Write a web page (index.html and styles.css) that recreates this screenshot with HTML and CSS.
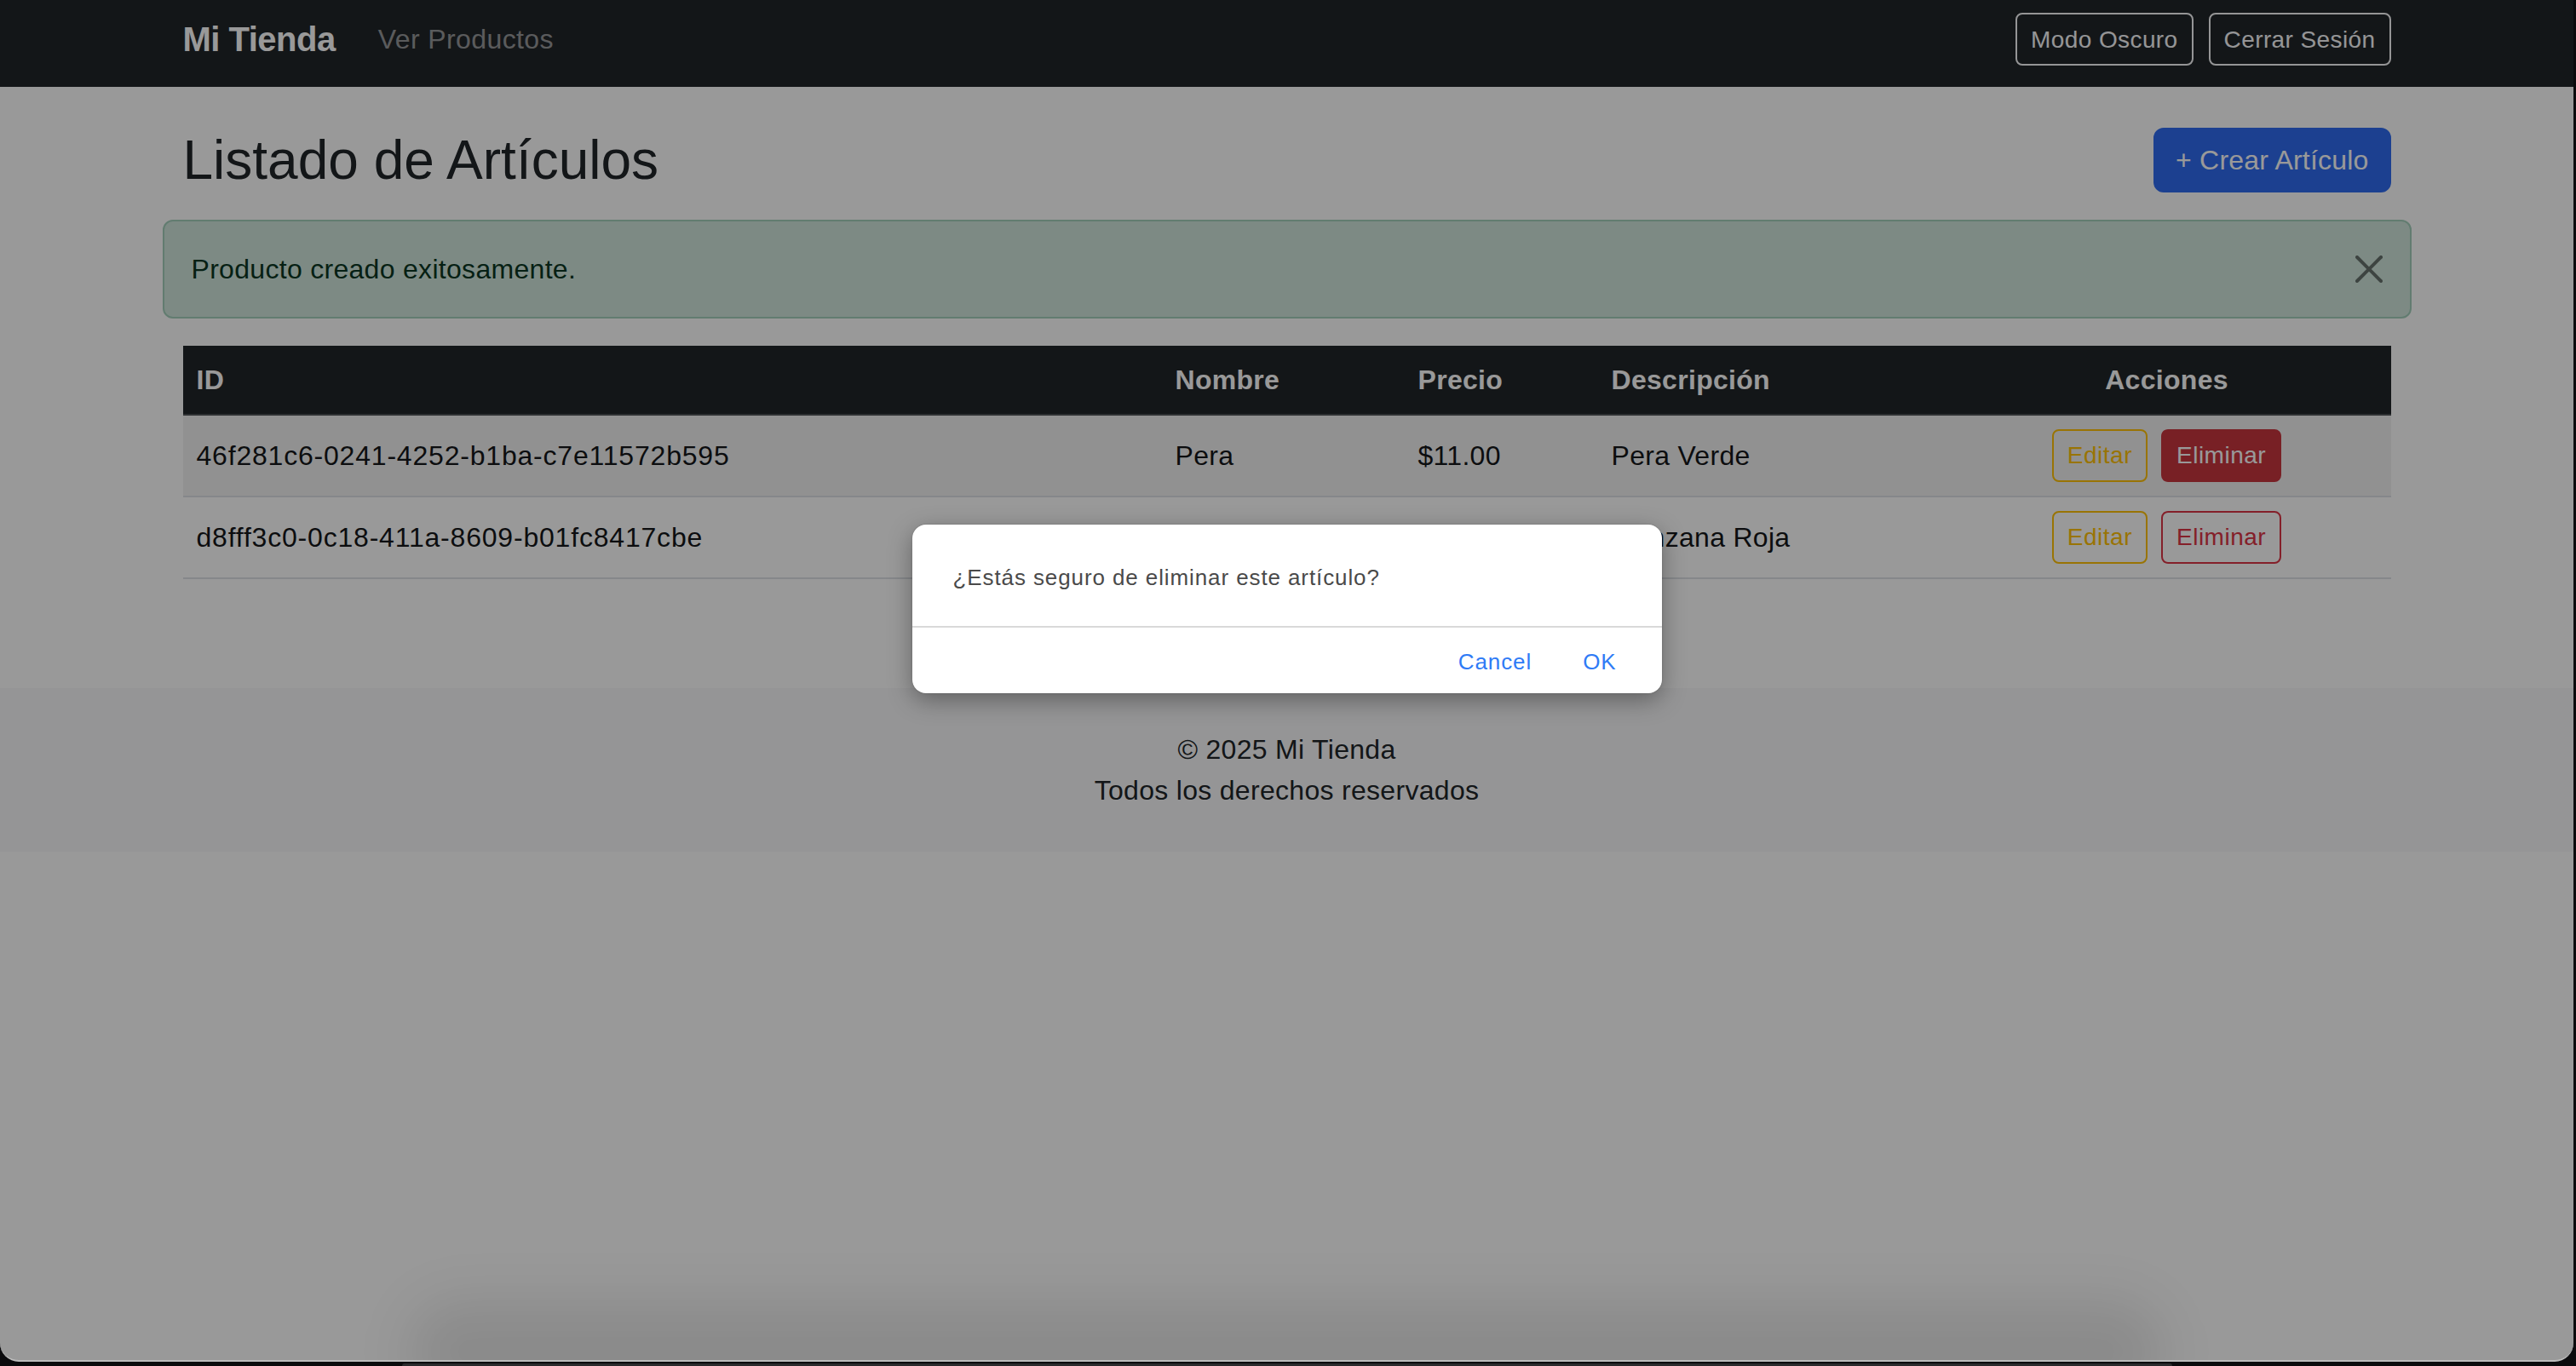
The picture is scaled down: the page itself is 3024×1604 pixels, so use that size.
FILE: index.html
```html
<!DOCTYPE html>
<html lang="es">
<head>
<meta charset="utf-8">
<title>Mi Tienda</title>
<link rel="stylesheet" href="styles.css">
</head>
<body>
<div class="window">
  <nav class="navbar">
    <div class="nav-inner">
      <a class="brand">Mi Tienda</a>
      <a class="nav-link">Ver Productos</a>
      <div class="nav-actions">
        <button class="btn-nav">Modo Oscuro</button>
        <button class="btn-nav">Cerrar Sesión</button>
      </div>
    </div>
  </nav>

  <main class="main">
    <div class="page-head">
      <h2 class="title">Listado de Artículos</h2>
      <a class="btn-primary">+ Crear Artículo</a>
    </div>

    <div class="alert">
      <span>Producto creado exitosamente.</span>
      <button class="btn-close" aria-label="Close">
        <svg viewBox="0 0 16 16" width="32" height="32"><path d="M.293.293a1 1 0 0 1 1.414 0L8 6.586 14.293.293a1 1 0 1 1 1.414 1.414L9.414 8l6.293 6.293a1 1 0 0 1-1.414 1.414L8 9.414l-6.293 6.293a1 1 0 0 1-1.414-1.414L6.586 8 .293 1.707a1 1 0 0 1 0-1.414z"/></svg>
      </button>
    </div>

    <table class="table">
      <colgroup>
        <col class="c-id"><col class="c-name"><col class="c-price"><col class="c-desc"><col class="c-act">
      </colgroup>
      <thead>
        <tr>
          <th>ID</th>
          <th>Nombre</th>
          <th>Precio</th>
          <th>Descripción</th>
          <th class="center">Acciones</th>
        </tr>
      </thead>
      <tbody>
        <tr class="striped">
          <td class="id">46f281c6-0241-4252-b1ba-c7e11572b595</td>
          <td>Pera</td>
          <td>$11.00</td>
          <td>Pera Verde</td>
          <td class="center">
            <div class="actions">
              <a class="btn-sm btn-warning-outline">Editar</a>
              <a class="btn-sm btn-danger">Eliminar</a>
            </div>
          </td>
        </tr>
        <tr>
          <td class="id">d8fff3c0-0c18-411a-8609-b01fc8417cbe</td>
          <td>Manzana</td>
          <td>$8.00</td>
          <td>Manzana Roja</td>
          <td class="center">
            <div class="actions">
              <a class="btn-sm btn-warning-outline">Editar</a>
              <a class="btn-sm btn-danger-outline">Eliminar</a>
            </div>
          </td>
        </tr>
      </tbody>
    </table>
  </main>

  <footer class="footer">
    <p>© 2025 Mi Tienda</p>
    <p>Todos los derechos reservados</p>
  </footer>

  <div class="overlay"></div>
  <div class="dock-shadow"></div>

  <div class="dialog" role="alertdialog">
    <div class="dialog-msg">¿Estás seguro de eliminar este artículo?</div>
    <div class="dialog-actions">
      <button class="dialog-btn">Cancel</button>
      <button class="dialog-btn">OK</button>
    </div>
  </div>
</div>
<div class="dock-edge"></div>
</body>
</html>
```

FILE: styles.css
```css
* { box-sizing: border-box; }

html, body {
  margin: 0;
  padding: 0;
}

body {
  background: #0b0b0d;
  font-family: "Liberation Sans", Arial, sans-serif;
  font-size: 32px;
  line-height: 48px;
  letter-spacing: 0.3px;
  color: #212529;
  width: 3024px;
  height: 1604px;
  overflow: hidden;
}

.window {
  position: relative;
  width: 3021px;
  height: 1599px;
  background: #ffffff;
  border-bottom: 2px solid #bcbcbc;
  border-radius: 0 0 22px 22px;
  overflow: hidden;
}

/* ---------- navbar ---------- */
.navbar {
  height: 102px;
  background: #212529;
}

.nav-inner {
  width: 2592px;
  height: 91px;
  margin: 0 auto;
  display: flex;
  align-items: center;
}

.brand {
  font-size: 40px;
  font-weight: 700;
  letter-spacing: -0.5px;
  color: #ffffff;
  margin-right: 34px;
  line-height: 60px;
}

.nav-link {
  padding: 0 16px;
  color: rgba(255, 255, 255, 0.55);
  font-size: 32px;
  letter-spacing: 0.4px;
}

.nav-actions {
  margin-left: auto;
  display: flex;
  gap: 18px;
}

.btn-nav {
  font-family: inherit;
  font-size: 28px;
  line-height: 42px;
  letter-spacing: 0.4px;
  padding: 9px 16px 7px;
  background: transparent;
  color: #f8f9fa;
  border: 2px solid #f8f9fa;
  border-radius: 8px;
}

/* ---------- main ---------- */
.main {
  width: 2640px;
  margin: 48px auto 0;
  padding-bottom: 32px;
}

.page-head {
  margin: 0 24px;
  height: 76px;
  display: flex;
  align-items: center;
  justify-content: space-between;
}

.title {
  margin: 0;
  font-size: 64px;
  font-weight: 400;
  line-height: 76.8px;
  letter-spacing: 0;
  color: #212529;
}

.btn-primary {
  display: inline-block;
  font-size: 32px;
  line-height: 48px;
  letter-spacing: 0.2px;
  padding: 12px 24px;
  border: 2px solid #2f6cf0;
  border-radius: 12px;
  background: #2f6cf0;
  color: #ffffff;
}

.alert {
  position: relative;
  margin-top: 32px;
  padding: 32px 96px 32px 32px;
  background: #d1e7dd;
  border: 2px solid #a3cfbb;
  border-radius: 12px;
  color: #0a3622;
}

.btn-close {
  position: absolute;
  top: 0;
  right: 0;
  box-sizing: content-box;
  width: 32px;
  height: 32px;
  padding: 40px 32px;
  border: 0;
  background: transparent;
  opacity: 0.5;
}

.btn-close svg {
  display: block;
  fill: #000000;
}

/* ---------- table ---------- */
.table {
  width: 2592px;
  margin: 32px 24px 0;
  border-collapse: collapse;
  table-layout: fixed;
}

.c-id { width: 1149px; }
.c-name { width: 285px; }
.c-price { width: 227px; }
.c-desc { width: 405px; }
.c-act { width: 526px; }

.table th {
  background: #212529;
  color: #ffffff;
  font-weight: 700;
  text-align: left;
  padding: 16px;
  line-height: 48px;
  border-bottom: 2px solid #4d5154;
}

.table td {
  padding: 16px;
  line-height: 48px;
  vertical-align: middle;
  border-bottom: 2px solid #dee2e6;
  color: #151719;
}

.table tr.striped td {
  background: #f2f2f2;
}

.table .center { text-align: center; }

.table td.id { letter-spacing: 0.8px; }

.actions {
  display: inline-flex;
  gap: 16px;
}

.btn-sm {
  display: inline-block;
  font-size: 28px;
  line-height: 42px;
  letter-spacing: 0.5px;
  padding: 8px 16px;
  border: 2px solid transparent;
  border-radius: 8px;
}

.btn-warning-outline {
  color: #ffc107;
  border-color: #ffc107;
}

.btn-danger {
  color: #ffffff;
  background: #c9363f;
  border-color: #c9363f;
}

.btn-danger-outline {
  color: #dc3545;
  border-color: #dc3545;
}

/* ---------- footer ---------- */
.footer {
  margin-top: 96px;
  padding: 48px 0;
  background: #f8f9fa;
  text-align: center;
  color: #212529;
}

.footer p { margin: 0; }

/* ---------- overlay / dialog ---------- */
.overlay {
  position: absolute;
  inset: 0;
  background: rgba(0, 0, 0, 0.4);
}

.dock-shadow {
  position: absolute;
  left: 480px;
  width: 2060px;
  bottom: -50px;
  height: 120px;
  background: rgba(0, 0, 0, 0.09);
  border-radius: 60px;
  filter: blur(30px);
}

.dialog {
  position: absolute;
  top: 616px;
  left: calc(50% - 440px);
  width: 880px;
  height: 198px;
  background: #ffffff;
  border-radius: 16px;
  box-shadow: 0 8px 28px rgba(0, 0, 0, 0.35), 0 0 2px rgba(0, 0, 0, 0.2);
  font-size: 26px;
  line-height: 36px;
  letter-spacing: 0.9px;
}

.dialog-msg {
  padding: 44px 48px 39px;
  color: #4a4a4a;
  border-bottom: 2px solid #d9d9d9;
}

.dialog-actions {
  display: flex;
  justify-content: flex-end;
  gap: 60px;
  padding: 22px 53px 19px;
}

.dialog-btn {
  font-family: inherit;
  font-size: 26px;
  line-height: 36px;
  letter-spacing: 0.9px;
  padding: 0;
  border: 0;
  background: transparent;
  color: #2f7bf6;
}

.dock-edge {
  margin: 2px 0 0 472px;
  width: 2078px;
  height: 3px;
  background: #2a2a2c;
  border-radius: 3px 3px 0 0;
}
```
